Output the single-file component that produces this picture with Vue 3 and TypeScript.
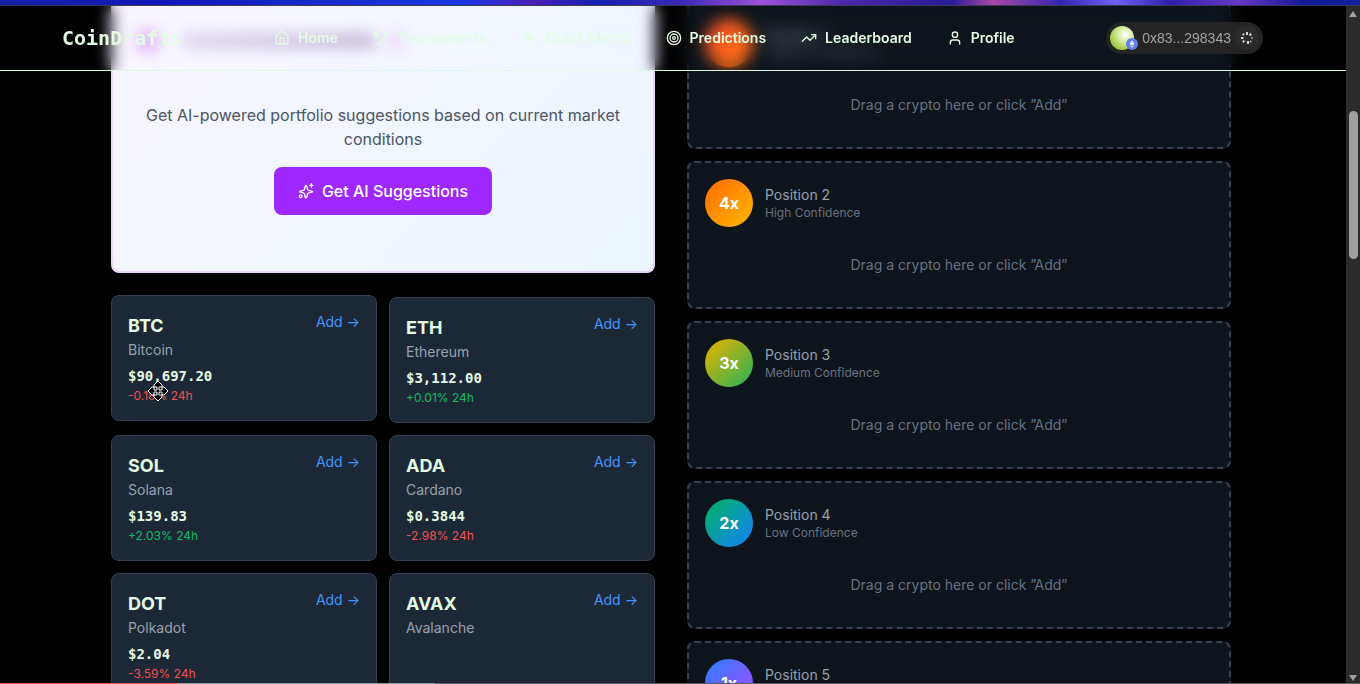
<script setup lang="ts">
interface Coin {
  symbol: string
  name: string
  price?: string
  change?: number
  active?: boolean
}

interface Slot {
  position: number
  multiplier?: string
  confidence: string
  tone: string
}

const links = [
  { label: 'Home', icon: 'home' },
  { label: 'Tournaments', icon: 'trophy' },
  { label: 'Quick Match', icon: 'match' },
  { label: 'Predictions', icon: 'target' },
  { label: 'Leaderboard', icon: 'trend' },
  { label: 'Profile', icon: 'user' },
]

const coins: Coin[] = [
  { symbol: 'BTC', name: 'Bitcoin', price: '$90,697.20', change: -0.18, active: true },
  { symbol: 'ETH', name: 'Ethereum', price: '$3,112.00', change: 0.01 },
  { symbol: 'SOL', name: 'Solana', price: '$139.83', change: 2.03 },
  { symbol: 'ADA', name: 'Cardano', price: '$0.3844', change: -2.98 },
  { symbol: 'DOT', name: 'Polkadot', price: '$2.04', change: -3.59 },
  { symbol: 'AVAX', name: 'Avalanche' },
]

const slots: Slot[] = [
  { position: 1, confidence: 'Highest Confidence', tone: 'red' },
  { position: 2, multiplier: '4x', confidence: 'High Confidence', tone: 'orange' },
  { position: 3, multiplier: '3x', confidence: 'Medium Confidence', tone: 'lime' },
  { position: 4, multiplier: '2x', confidence: 'Low Confidence', tone: 'teal' },
  { position: 5, multiplier: '1x', confidence: 'Lowest Confidence', tone: 'violet' },
]

const formatChange = (value: number): string => `${value > 0 ? '+' : ''}${value.toFixed(2)}% 24h`
</script>

<template>
  <div class="window">
    <div class="backdrop-strip"></div>
    <div class="stage">
      <div class="viewport">
        <header class="topbar">
          <a class="logo" href="#">CoinDrafts</a>
          <nav class="nav">
            <a v-for="link in links" :key="link.label" class="nav-link" href="#">
              <svg class="icon" viewBox="0 0 24 24" aria-hidden="true">
                <g v-if="link.icon === 'home'">
                  <path d="M15 21v-8a1 1 0 0 0-1-1h-4a1 1 0 0 0-1 1v8" />
                  <path d="M3 10a2 2 0 0 1 .7-1.5l7-6a2 2 0 0 1 2.6 0l7 6A2 2 0 0 1 21 10v9a2 2 0 0 1-2 2H5a2 2 0 0 1-2-2z" />
                </g>
                <g v-else-if="link.icon === 'trophy'">
                  <path d="M6 9H4.500a2.500 2.500 0 0 1 0-5H6" />
                  <path d="M18 9h1.500a2.500 2.500 0 0 0 0-5H18" />
                  <path d="M4 22h16" />
                  <path d="M10 14.700V17c0 .600-.500 1-1 1.200C7.900 18.800 7 20.200 7 22" />
                  <path d="M14 14.700V17c0 .600.500 1 1 1.200 1.100.600 2 2 2 3.800" />
                  <path d="M18 2H6v7a6 6 0 0 0 12 0V2Z" />
                </g>
                <g v-else-if="link.icon === 'match'">
                  <path d="M12 3l4 4-4 4-4-4zM12 13l4 4-4 4-4-4zM7 8l4 4-4 4-4-4zM17 8l4 4-4 4-4-4z" />
                </g>
                <g v-else-if="link.icon === 'target'">
                  <circle cx="12" cy="12" r="10" />
                  <circle cx="12" cy="12" r="6" />
                  <circle cx="12" cy="12" r="2" />
                </g>
                <g v-else-if="link.icon === 'trend'">
                  <path d="M22 7l-8.500 8.500-5-5L2 17" />
                  <path d="M16 7h6v6" />
                </g>
                <g v-else>
                  <circle cx="12" cy="7" r="4" />
                  <path d="M19 21v-2a4 4 0 0 0-4-4H9a4 4 0 0 0-4 4v2" />
                </g>
              </svg>
              {{ link.label }}
            </a>
          </nav>
          <button class="wallet" type="button">
            <span class="avatar">
              <svg class="chain" viewBox="0 0 12 12" aria-hidden="true">
                <circle cx="6" cy="6" r="6" fill="#627eea" />
                <path d="M6 2l2.400 4L6 7.400 3.600 6zM6 10L3.600 6.800 6 8.200l2.400-1.400z" fill="#e6ebff" />
              </svg>
            </span>
            <span class="address">0x83...298343</span>
            <svg class="spinner" viewBox="0 0 24 24" aria-hidden="true">
              <circle cx="12" cy="12" r="12" fill="#2b2b2b" />
              <g stroke="#d8d8d8" stroke-width="2">
                <path d="M12 6v3" />
                <path d="M16.200 7.800l-1.700 1.700" />
                <path d="M18 12h-2" opacity=".5" />
                <path d="M16.200 16.200l-1.200-1.200" opacity=".7" />
                <path d="M13 18v-3" />
                <path d="M7.800 16.200l1.600-1.600" />
                <path d="M6 12h2.500" />
                <path d="M7.800 7.800l1.200 1.200" />
              </g>
            </svg>
          </button>
        </header>

        <main class="columns">
          <section class="market">
            <article class="ai-card">
              <div class="ai-heading" aria-hidden="true">
                <span class="ai-mark"></span>
                <span class="ai-title"></span>
                <span class="ai-spark"></span>
              </div>
              <div class="ai-body">
                <p>Get AI-powered portfolio suggestions based on current market conditions</p>
                <button class="ai-button" type="button">
                  <svg class="icon" viewBox="0 0 24 24" aria-hidden="true">
                    <path d="M11 4.500c.300-1.200 1.700-1.200 2 0l1.100 4.600a3 3 0 0 0 2 2l4.600 1.100c1.200.300 1.200 1.300 0 1.600l-4.600 1.100a3 3 0 0 0-2 2L13 21.500c-.300 1.200-1.700 1.200-2 0l-1.100-4.600a3 3 0 0 0-2-2l-4.600-1.100c-1.200-.300-1.200-1.300 0-1.600l4.600-1.100a3 3 0 0 0 2-2z" />
                    <path d="M20 1v5M17.500 3.500h5" />
                    <circle cx="4" cy="20" r="2" />
                  </svg>
                  Get AI Suggestions
                </button>
              </div>
            </article>

            <div class="coins">
              <article v-for="coin in coins" :key="coin.symbol" class="coin" :class="{ lifted: coin.active }">
                <div class="coin-top">
                  <div>
                    <h3>{{ coin.symbol }}</h3>
                    <p class="coin-name">{{ coin.name }}</p>
                  </div>
                  <button class="add" type="button">Add →</button>
                </div>
                <p v-if="coin.price" class="price">{{ coin.price }}</p>
                <p v-if="coin.change !== undefined" class="change" :class="coin.change < 0 ? 'down' : 'up'">
                  {{ formatChange(coin.change) }}
                </p>
                <svg v-if="coin.active" class="move" viewBox="0 0 22 22" aria-hidden="true">
                  <path
                    d="M11 1l4 4v2h2l4 4-4 4h-2v2l-4 4-4-4v-2H5l-4-4 4-4h2V5z"
                    fill="#000" stroke="#fff" stroke-width="1"
                  />
                  <path d="M7 7h3v3H7zM12 7h3v3h-3zM7 12h3v3H7zM12 12h3v3h-3z" fill="none" stroke="#fff" stroke-width="1" />
                </svg>
              </article>
            </div>
          </section>

          <section class="slots">
            <article v-for="slot in slots" :key="slot.position" class="slot">
              <div class="slot-top">
                <span class="badge" :class="slot.tone">{{ slot.multiplier }}</span>
                <div>
                  <p class="slot-title">Position {{ slot.position }}</p>
                  <p class="slot-note">{{ slot.confidence }}</p>
                </div>
              </div>
              <p class="drop">Drag a crypto here or click ”Add”</p>
            </article>
          </section>
        </main>
      </div>

      <div class="scrollbar" aria-hidden="true">
        <svg viewBox="0 0 10 8"><path d="M5 1L9 7H1z" /></svg>
        <div class="track"><div class="thumb"></div></div>
        <svg viewBox="0 0 10 8"><path d="M5 7L9 1H1z" /></svg>
      </div>
    </div>
    <div class="progress" aria-hidden="true"></div>
  </div>
</template>

<style>
body {
  margin: 0;
  background: #000;
}
</style>

<style scoped>
* {
  box-sizing: border-box;
}
h3,
p {
  margin: 0;
}
button {
  border: 0;
  font: inherit;
  cursor: pointer;
}
a {
  color: inherit;
  text-decoration: none;
}
.window {
  position: relative;
  display: flex;
  flex-direction: column;
  height: 100vh;
  overflow: hidden;
  background: #000;
  color: #e4fbe4;
  font-family: Inter, "Liberation Sans", sans-serif;
  font-size: 14px;
  line-height: 20px;
}
.backdrop-strip {
  flex: none;
  height: 6px;
  border-bottom: 1px solid #3a3a55;
  background: linear-gradient(90deg, #1420a8, #1018b8 12%, #1a2ccc 25%, #1838e0 34%, #4a20b8 39%, #1420b0 44%, #3a28b8 50%, #a050d8 56%, #4a28a8 62%, #2a1c98 70%, #a848a8 73%, #3424b0 78%, #7060f8 82%, #3020a8 86%, #6838c8 91%, #101898 96%, #1420a0);
}
.stage {
  display: flex;
  flex: 1;
  min-height: 0;
}
.viewport {
  position: relative;
  flex: 1;
  min-width: 0;
  overflow: hidden;
}
.topbar {
  position: absolute;
  z-index: 2;
  top: 0;
  left: 0;
  right: 0;
  display: flex;
  align-items: center;
  justify-content: space-between;
  height: 65px;
  padding: 0 83px 0 62px;
  border-bottom: 1px solid #e0f8e0;
  backdrop-filter: blur(8px);
}
.logo {
  font-family: "DejaVu Sans Mono", "Liberation Mono", monospace;
  font-size: 20px;
  font-weight: 700;
  line-height: 28px;
}
.nav {
  display: flex;
  gap: 35px;
}
.nav-link {
  display: flex;
  align-items: center;
  gap: 8px;
  font-weight: 600;
}
.icon {
  width: 16px;
  height: 16px;
  fill: none;
  stroke: currentColor;
  stroke-width: 2;
  stroke-linecap: round;
  stroke-linejoin: round;
}
.wallet {
  display: flex;
  align-items: center;
  gap: 4px;
  height: 32px;
  padding: 0 4px;
  border-radius: 16px;
  background: #242424;
  color: #a6a19d;
}
.address {
  font-family: "Liberation Sans", sans-serif;
}
.avatar {
  position: relative;
  width: 24px;
  height: 24px;
  margin-right: 4px;
  border-radius: 50%;
  background: radial-gradient(circle at 65% 35%, #fff, #d5eba0 35%, #9cc63c 75%, #84b52c);
}
.chain {
  position: absolute;
  right: -4px;
  bottom: 0;
  width: 12px;
  height: 12px;
}
.spinner {
  width: 24px;
  height: 24px;
  fill: none;
}
.columns {
  display: grid;
  grid-template-columns: 1fr 1fr;
  gap: 32px;
  align-items: start;
  max-width: 1124px;
  margin: -5px auto 0;
  padding-right: 4px;
}
.ai-card {
  padding: 24px;
  border: 2px solid #e9d4ff;
  border-top: 0;
  border-radius: 0 0 8px 8px;
  background: linear-gradient(135deg, #f8f5ff, #f2f6ff 50%, #ecf5fe);
  color: #4a5565;
  text-align: center;
}
.ai-heading {
  display: flex;
  align-items: center;
  gap: 24px;
  height: 32px;
  margin-bottom: 14px;
}
.ai-mark,
.ai-spark {
  width: 22px;
  height: 22px;
  border-radius: 50%;
  background: #dda8ff;
}
.ai-title {
  width: 192px;
  height: 12px;
  background: linear-gradient(90deg, #d6cce8, #bba6cc);
}
.ai-spark {
  width: 18px;
  margin-left: -12px;
  background: #ecd8ff;
}
.ai-body {
  display: flex;
  flex-direction: column;
  align-items: center;
  gap: 16px;
  padding: 32px 0;
  font-size: 16px;
  line-height: 24px;
}
.ai-button {
  display: flex;
  align-items: center;
  gap: 8px;
  height: 48px;
  padding: 0 24px;
  border-radius: 8px;
  background: #9f27ff;
  color: #fff;
  font-weight: 500;
}
.coins {
  display: grid;
  grid-template-columns: 1fr 1fr;
  gap: 12px;
  margin-top: 24px;
}
.coin {
  position: relative;
  min-height: 126px;
  padding: 16px;
  border: 1px solid #364153;
  border-radius: 8px;
  background: #1d2837;
}
.lifted {
  transform: translateY(-2px);
}
.coin-top {
  display: flex;
  align-items: flex-start;
  justify-content: space-between;
}
h3 {
  font-size: 18px;
  font-weight: 700;
  line-height: 28px;
}
.coin-name {
  color: #99a1af;
}
.add {
  padding: 0;
  background: none;
  color: #4296ff;
}
.price {
  margin-top: 4px;
  font-family: "DejaVu Sans Mono", "Liberation Mono", monospace;
  font-weight: 700;
  line-height: 24px;
}
.change {
  font-size: 12px;
  line-height: 16px;
}
.up {
  color: #10bd62;
}
.down {
  color: #f0524f;
}
.move {
  position: absolute;
  top: 84px;
  left: 35px;
  width: 22px;
  height: 22px;
}
.slots {
  display: flex;
  flex-direction: column;
  gap: 12px;
}
.slot {
  padding: 16px;
  border: 2px dashed #364153;
  border-radius: 8px;
  background: #0d141b;
}
.slot-top {
  display: flex;
  align-items: center;
  gap: 12px;
}
.badge {
  display: flex;
  align-items: center;
  justify-content: center;
  width: 48px;
  height: 48px;
  border-radius: 50%;
  color: #fff;
  font-size: 16px;
  font-weight: 700;
}
.red {
  background: linear-gradient(135deg, #fb4a2c, #ff7a10);
}
.orange {
  background: linear-gradient(135deg, #ff6900, #ffb900);
}
.lime {
  background: linear-gradient(135deg, #f0b100, #22b455);
}
.teal {
  background: linear-gradient(135deg, #00b45c, #1480ff);
}
.violet {
  background: linear-gradient(135deg, #2b7fff, #ad46ff);
}
.slot-title {
  color: #99a1af;
}
.slot-note {
  color: #6a7282;
  font-size: 12px;
  line-height: 16px;
}
.drop {
  margin-top: 12px;
  padding: 16px 0;
  color: #6a7282;
  text-align: center;
}
.scrollbar {
  display: flex;
  flex-direction: column;
  align-items: center;
  width: 14px;
  padding: 4px 0 2px;
  background: #2b2b2b;
}
.scrollbar svg {
  flex: none;
  width: 10px;
  height: 8px;
  fill: #a0a0a0;
}
.track {
  display: grid;
  flex: 1;
  grid-template-rows: 93fr 148fr 415fr;
}
.thumb {
  grid-row: 2;
  width: 9px;
  border-radius: 5px;
  background: #9f9f9f;
}
.progress {
  position: absolute;
  z-index: 3;
  bottom: 0;
  left: 0;
  width: 100%;
  height: 1px;
  background: linear-gradient(90deg, #f05a3c 13%, #9298a0 13% 32%, #5a5d62 32%);
}
</style>
